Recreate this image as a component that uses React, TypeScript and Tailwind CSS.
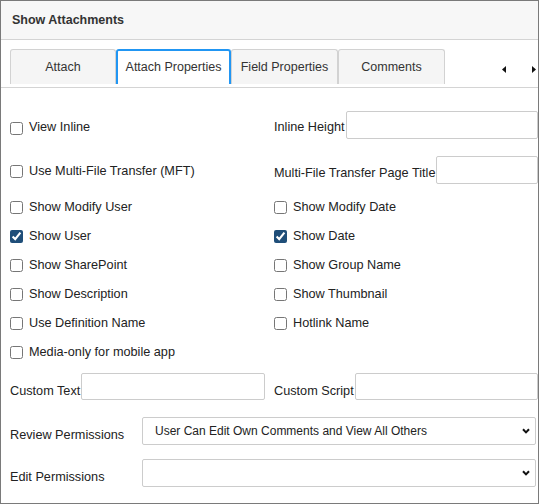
import React from 'react'

const font = { fontFamily: '"Liberation Sans", Arial, sans-serif' }

function Check({ label, checked = false }: { label: string; checked?: boolean }) {
  return (
    <label className="flex items-center h-[29px] text-[12.7px] text-[#222]">
      <input
        type="checkbox"
        defaultChecked={checked}
        className="w-[13px] h-[13px] m-0 mr-[6px] accent-[#1f4e79]"
      />
      {label}
    </label>
  )
}

function Tab({ label, active = false }: { label: string; active?: boolean }) {
  return (
    <div
      className={
        active
          ? 'w-[115px] h-[35px] flex items-center justify-center bg-white border-2 border-b-0 border-[#2196f3] rounded-t-[3px] text-[12.5px] text-[#333]'
          : 'w-[107px] h-[35px] flex items-center justify-center bg-[#f5f5f5] border border-b-0 border-[#d2d2d2] rounded-t-[3px] text-[12.5px] text-[#333]'
      }
    >
      {label}
    </div>
  )
}

function Select({ value }: { value: string }) {
  return (
    <div className="flex-1 h-[28px] border border-[#ccc] rounded-[2px] bg-white flex items-center pl-[12px] pr-[5px] text-[12px] text-[#222]">
      <span className="flex-1">{value}</span>
      <svg width="8" height="6" viewBox="0 0 8 6">
        <path d="M1 1.2 L4 4.4 L7 1.2" fill="none" stroke="#111" strokeWidth="2" />
      </svg>
    </div>
  )
}

export default function App() {
  return (
    <div style={font} className="w-[539px] h-[504px] border border-[#7a7a7a] bg-white flex flex-col">
      <div className="h-[39px] shrink-0 bg-[#f7f7f7] border-b border-[#d4d4d4] flex items-center px-[11px] text-[12.5px] font-bold text-[#333]">
        Show Attachments
      </div>

      <div className="h-[48px] shrink-0 border-b border-[#d4d4d4] flex items-start pt-[9px] pl-[9px]">
        <div className="flex">
          <div className="w-[106px] h-[35px] flex items-center justify-center bg-[#f5f5f5] border border-b-0 border-[#d2d2d2] rounded-t-[3px] text-[12.5px] text-[#333]">
            Attach
          </div>
          <Tab label="Attach Properties" active />
          <Tab label="Field Properties" />
          <Tab label="Comments" />
        </div>
        <div className="flex-1 flex items-center justify-end gap-[26px] h-[35px] pt-[6px] pr-[2px]">
          <svg width="4" height="7" viewBox="0 0 4 7">
            <path d="M4 0 L0 3.5 L4 7 Z" fill="#111" />
          </svg>
          <svg width="4" height="7" viewBox="0 0 4 7">
            <path d="M0 0 L4 3.5 L0 7 Z" fill="#111" />
          </svg>
        </div>
      </div>

      <div className="flex flex-col pl-[9px] pt-[23px] text-[12.7px] text-[#222]">
        <div className="grid grid-cols-[255px_1fr] gap-x-[9px]">
          <div className="h-[28px] flex items-center pt-[6px]">
            <Check label="View Inline" />
          </div>
          <div className="h-[28px] flex items-center">
            <span className="pt-[6px]">Inline Height</span>
            <input className="flex-1 h-[28px] border border-[#ccc] rounded-[2px] ml-[1px]" />
          </div>

          <div className="h-[28px] flex items-center mt-[17px] pt-[3px]">
            <Check label="Use Multi-File Transfer (MFT)" />
          </div>
          <div className="h-[28px] flex items-center mt-[17px]">
            <span className="pt-[7px]">Multi-File Transfer Page Title</span>
            <input className="flex-1 min-w-0 h-[28px] border border-[#ccc] rounded-[2px] ml-[1px]" />
          </div>

          <div className="mt-[9px]">
            <Check label="Show Modify User" />
            <Check label="Show User" checked />
            <Check label="Show SharePoint" />
            <Check label="Show Description" />
            <Check label="Use Definition Name" />
            <Check label="Media-only for mobile app" />
          </div>
          <div className="mt-[9px]">
            <Check label="Show Modify Date" />
            <Check label="Show Date" checked />
            <Check label="Show Group Name" />
            <Check label="Show Thumbnail" />
            <Check label="Hotlink Name" />
          </div>

          <div className="h-[27px] flex items-center mt-[6px]">
            <span className="pt-[11px]">Custom Text</span>
            <input className="flex-1 min-w-0 h-[27px] border border-[#ccc] rounded-[2px] ml-[1px]" />
          </div>
          <div className="h-[27px] flex items-center mt-[6px]">
            <span className="pt-[11px]">Custom Script</span>
            <input className="flex-1 min-w-0 h-[27px] border border-[#ccc] rounded-[2px] ml-[1px]" />
          </div>
        </div>

        <div className="flex items-center mt-[16px] pr-[2px]">
          <span className="w-[132px] pt-[10px]">Review Permissions</span>
          <Select value="User Can Edit Own Comments and View All Others" />
        </div>
        <div className="flex items-center mt-[14px] pr-[2px]">
          <span className="w-[132px] pt-[8px]">Edit Permissions</span>
          <Select value="" />
        </div>
      </div>
    </div>
  )
}
